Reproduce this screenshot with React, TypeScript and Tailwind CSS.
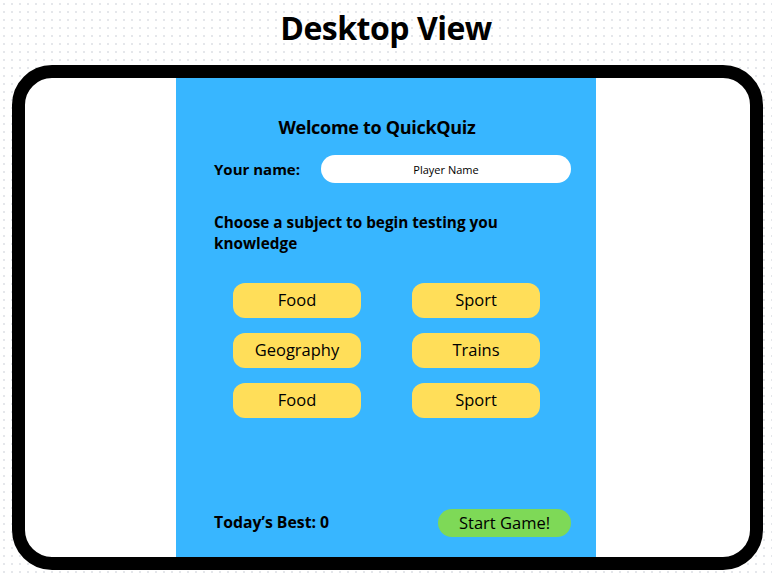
const subjects = ['Food', 'Sport', 'Geography', 'Trains', 'Food', 'Sport']

export default function App() {
  return (
    <div
      className="w-[772px] h-[576px] overflow-hidden bg-white bg-[radial-gradient(#e5e7eb_1px,transparent_1.2px)] bg-[size:8px_8px] text-black"
      style={{ fontFamily: '"Open Sans", "Noto Sans", sans-serif' }}
    >
      {/* title */}
      <div className="h-[65px] flex justify-center pt-[8px]">
        <h1 className="text-[32px] leading-[40px] font-bold tracking-[-0.5px]">Desktop View</h1>
      </div>

      {/* device frame */}
      <div className="ml-[12px] w-[751px] h-[505px] border-[13px] border-black rounded-[40px] bg-white overflow-hidden">
        <div className="h-full pl-[151px]">
          <div className="w-[420px] h-full bg-[#38b6ff] flex flex-col pl-[38px] pr-[25px]">
            <div className="mt-[37px] -ml-[38px] w-[402px] text-center text-[18px] leading-[24px] font-bold tracking-[-0.3px]">
              Welcome to QuickQuiz
            </div>

            <div className="mt-[16px] flex items-center justify-between">
              <label htmlFor="player" className="text-[15px] font-bold">Your name:</label>
              <input
                id="player"
                placeholder="Player Name"
                className="w-[250px] h-[28px] rounded-full bg-white text-center text-[11px] placeholder:text-black outline-none"
              />
            </div>

            <p className="mt-[29px] w-[300px] text-[15.3px] leading-[21px] font-bold">
              Choose a subject to begin testing you knowledge
            </p>

            <div className="mt-[29px] ml-[19px] grid grid-cols-[128px_128px] gap-x-[51px] gap-y-[15px]">
              {subjects.map((s, i) => (
                <button
                  key={i}
                  className="h-[35px] rounded-[12px] bg-[#ffde59] text-[16.5px]"
                >
                  {s}
                </button>
              ))}
            </div>

            <div className="mt-auto mb-[20px] flex items-center justify-between">
              <span className="text-[15.8px] font-bold">Today’s Best: 0</span>
              <button className="w-[133px] h-[28px] rounded-[14px] bg-[#7ed957] text-[16.5px]">
                Start Game!
              </button>
            </div>
          </div>
        </div>
      </div>
    </div>
  )
}
